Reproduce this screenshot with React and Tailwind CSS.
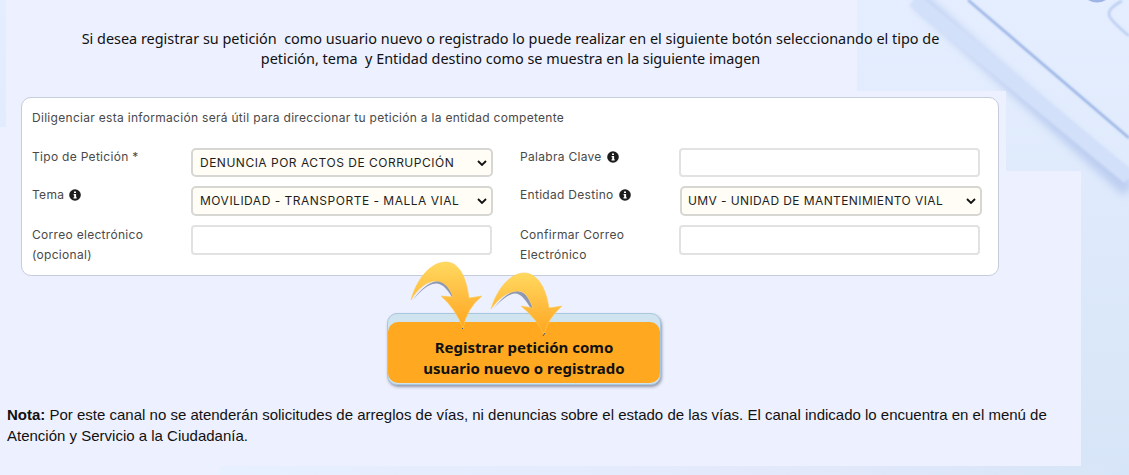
import React from 'react'

function InfoIcon() {
  return (
    <svg viewBox="0 0 12 12" className="w-3 h-3 ml-[5px] shrink-0">
      <circle cx="6" cy="6" r="5.8" fill="#1c1c1c" />
      <path d="M5 2.4h2v1.7H5zM4.6 5h2.5v3.2h.6v1.3H4.5V8.2h.7V6.3h-.6z" fill="#fff" />
    </svg>
  )
}

function Background() {
  return (
    <svg className="absolute inset-0" width="1129" height="475" viewBox="0 0 1129 475">
      <defs>
        <linearGradient id="page" x1="0" y1="0" x2="0" y2="1">
          <stop offset="0" stopColor="#e5eeff" />
          <stop offset="1" stopColor="#d6e5f7" />
        </linearGradient>
        <linearGradient id="strip" x1="0" y1="0" x2="1" y2="0">
          <stop offset="0" stopColor="#e7f0ff" />
          <stop offset="0.6" stopColor="#e3e9fb" />
          <stop offset="1" stopColor="#d6e5f7" />
        </linearGradient>
        <filter id="soft" x="-10%" y="-10%" width="120%" height="120%">
          <feGaussianBlur stdDeviation="4" />
        </filter>
        <filter id="softer" x="-10%" y="-10%" width="120%" height="120%">
          <feGaussianBlur stdDeviation="0.8" />
        </filter>
      </defs>
      <rect width="1129" height="475" fill="url(#page)" />
      <rect x="220" y="466" width="909" height="9" fill="url(#strip)" />
      <path d="M919 0L1129 190" stroke="#bccdf0" strokeWidth="16" fill="none" filter="url(#soft)" />
      <path d="M914 0L1129 177" stroke="#d3e0f9" strokeWidth="15" fill="none" filter="url(#softer)" />
      <path d="M968 0L1129 138" stroke="#86a4de" strokeWidth="2" fill="none" filter="url(#softer)" />
      <path d="M1122 1Q1108 8 1109 15Q1110 20 1129 36" stroke="#b3c6ee" strokeWidth="2" fill="none" filter="url(#softer)" />
      <path d="M1088 0Q1097 5 1106 0Z" fill="#9db4e4" />
      <path d="M6 0H857V91H1006V171H1081V466H220V475H0V127H6Z" fill="#edf0ff" />
    </svg>
  )
}

function Field({ label, info, tall, children }) {
  return (
    <div className="flex items-start">
      <div className={`w-[159px] shrink-0 leading-5 text-[12px] text-[#494949] tracking-[0.3px] ${tall ? '' : '-mt-px'}`}>
        <span className="flex items-center flex-wrap w-[140px]">
          {label}
          {info && <InfoIcon />}
        </span>
      </div>
      {children}
    </div>
  )
}

function SelectBox({ value, className = 'h-[29px]', textClass = 'pl-[7px] tracking-[0.5px]' }) {
  return (
    <div className={`relative w-[302px] ${className}`}>
      <select
        defaultValue={value}
        className={`appearance-none w-full h-full rounded-[5px] border-2 border-[#d6d6d2] bg-[#fffdf6] text-[12px] text-[#1e1e1e] outline-none ${textClass}`}
      >
        <option>{value}</option>
      </select>
      <svg viewBox="0 0 10 6" className="absolute right-[6px] top-1/2 -translate-y-1/2 w-2.5 h-1.5" fill="none" stroke="#111" strokeWidth="1.8">
        <path d="M1 1l4 4 4-4" />
      </svg>
    </div>
  )
}

function TextBox({ tall }) {
  return <input className={`w-[301px] rounded-[4px] border-2 border-[#e2e2e2] bg-white outline-none ${tall ? 'h-[30px]' : 'h-[29px]'}`} />
}

function Arrows() {
  return (
    <svg viewBox="0 0 170 85" width="170" height="85" className="absolute left-[13px] top-[-58px]">
      <defs>
        <linearGradient id="arrowFill" x1="0" y1="0" x2="0" y2="1">
          <stop offset="0" stopColor="#ffd95e" />
          <stop offset="0.5" stopColor="#ffbe42" />
          <stop offset="1" stopColor="#ffa61e" />
        </linearGradient>
      </defs>
      <path d="M12 44C20 32 30 25 38 25C47 25 51 33 54 42L52 43C47 34 42 27.5 35 27.5C26 28 18 37 12 44Z" fill="#4f5e80" opacity="0.6" />
      <path d="M10 44C16 22 30 6 45 6C60 6 66 26 68 42L81 40Q66 52 62 72Q54 52 40 40L52 41C48 30 42 25 35 25C26 25 16 33 10 44Z" fill="url(#arrowFill)" stroke="#ffcb52" strokeWidth="0.6" />
      <path d="M62 72L61 73" stroke="#4a5d80" strokeWidth="1" />
      <path d="M92 53C100 43 108 35 116 35C125 35 129 44 132 52L130 53C125 44 120 37.5 114 37.5C106 38 98 47 92 53Z" fill="#4f5e80" opacity="0.6" />
      <path d="M90 53C96 32 110 17 123 17C138 17 146 36 148 52L161 50Q147 62 143 78Q135 62 120 50L132 52C128 42 124 35 117 35C107 35 97 43 90 53Z" fill="url(#arrowFill)" stroke="#ffcb52" strokeWidth="0.6" />
      <path d="M144 77L142 80" stroke="#4a5d80" strokeWidth="1" />
    </svg>
  )
}

export default function App() {
  return (
    <div className="relative w-[1129px] h-[475px] overflow-hidden">
      <Background />
      <div className="relative">
        <p className="w-[1021px] pt-[29px] text-center text-[14.43px] leading-5 text-[#111] font-['Noto_Sans',sans-serif] whitespace-pre-wrap">
          {'Si desea registrar su petición  como usuario nuevo o registrado lo puede realizar en el siguiente botón seleccionando el tipo de'}
          <br />
          {'petición, tema  y Entidad destino como se muestra en la siguiente imagen'}
        </p>

        <div className="mt-[28px] ml-[21px] w-[978px] h-[179px] rounded-[10px] border border-[#c5ccdc] bg-white pt-[10px] pl-[10px] font-['Inter',sans-serif]">
          <p className="text-[12px] leading-5 text-[#494949] tracking-[0.3px]">
            Diligenciar esta información será útil para direccionar tu petición a la entidad competente
          </p>
          <div className="mt-[20px] grid grid-cols-[461px_462px] gap-x-[27px] gap-y-[9px]">
            <Field label="Tipo de Petición *"><SelectBox value="DENUNCIA POR ACTOS DE CORRUPCIÓN" /></Field>
            <Field label="Palabra Clave" info><TextBox /></Field>
            <Field label="Tema" info><SelectBox value="MOVILIDAD - TRANSPORTE - MALLA VIAL" className="h-[30px]" /></Field>
            <Field label="Entidad Destino" info>
              <SelectBox value="UMV - UNIDAD DE MANTENIMIENTO VIAL" className="h-[30px] ml-px" textClass="pl-[6px] tracking-[0.4px]" />
            </Field>
            <Field label="Correo electrónico (opcional)" tall><TextBox tall /></Field>
            <Field label="Confirmar Correo Electrónico" tall><TextBox tall /></Field>
          </div>
        </div>

        <div className="relative mt-[37px] ml-[387px] w-[274px] h-[72px] rounded-[10px] border border-[#a8c8e0] bg-[#cfe4ee] shadow-[1px_2px_3px_rgba(60,70,90,0.5)]">
          <div className="absolute inset-x-0 top-[8px] bottom-[1px] flex items-center justify-center rounded-[10px] bg-[#ffa820] pt-[10px] text-center text-[15px] leading-[21px] font-bold text-[#111] font-['Noto_Sans',sans-serif]">
            <span>
              Registrar petición como
              <br />
              usuario nuevo o registrado
            </span>
          </div>
          <Arrows />
        </div>

        <p className="mt-[19px] pl-[7px] text-[15px] leading-[21px] text-[#111] font-['Liberation_Sans',sans-serif]">
          <b>Nota:</b> Por este canal no se atenderán solicitudes de arreglos de vías, ni denuncias sobre el estado de las vías. El canal indicado lo encuentra en el menú de
          <br />
          Atención y Servicio a la Ciudadanía.
        </p>
      </div>
    </div>
  )
}
